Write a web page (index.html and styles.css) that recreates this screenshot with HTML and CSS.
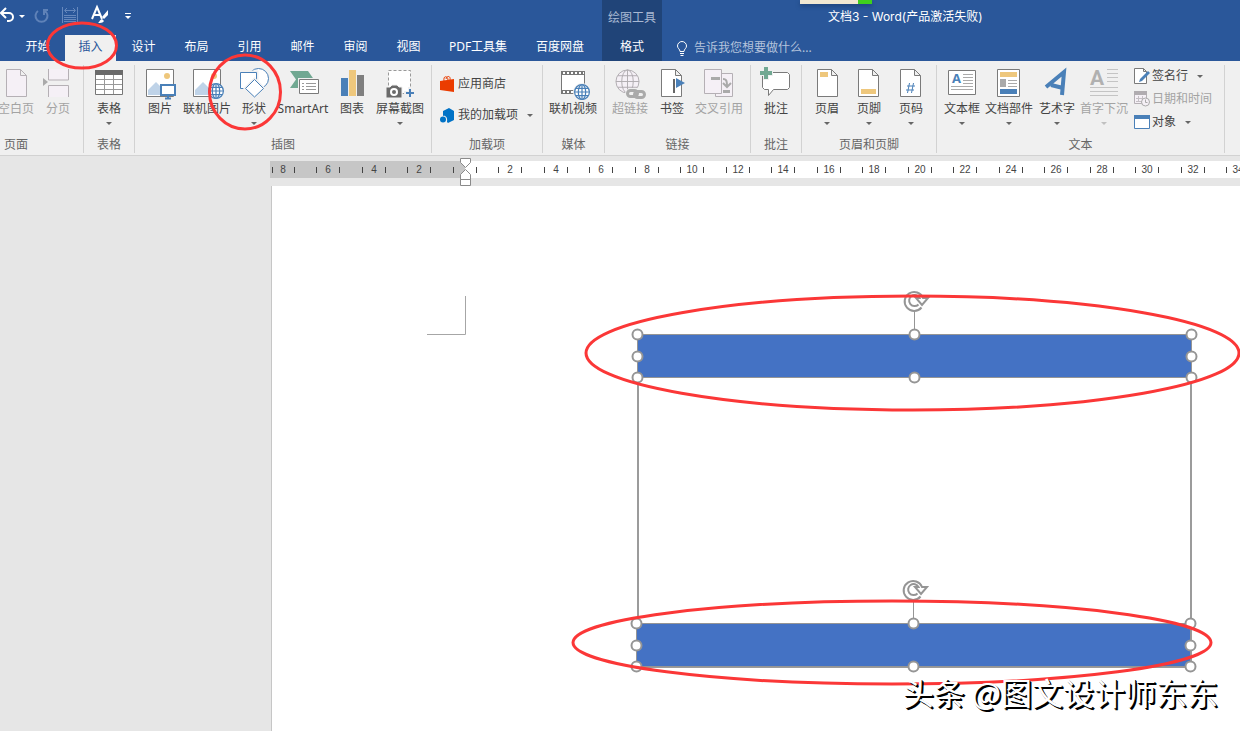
FILE: index.html
```html
<!DOCTYPE html>
<html lang="zh-CN">
<head>
<meta charset="utf-8">
<title>文档3 - Word</title>
<link rel="stylesheet" href="styles.css">
</head>
<body>
<svg class="defs" aria-hidden="true">
  <symbol id="globe" viewBox="0 0 26 26" overflow="visible">
    <circle cx="13" cy="13" r="12"/><ellipse cx="13" cy="13" rx="6" ry="12"/><path d="M13 1v24M1 13h24M3 7h20M3 19h20"/>
  </symbol>
  <symbol id="sheet" viewBox="0 0 22 29"><path d="M.5.5h14l6 6v21h-20zM14.500.5v6h6"/></symbol>
  <symbol id="photo" viewBox="0 0 28 28">
    <path fill="#fff" stroke="#7a7a7a" d="M.5.5h27v27H.500z"/><circle cx="21" cy="7" r="3" fill="#eec77c"/><path fill="#bfd3e8" d="M2 26v-5l8-8 13 13z"/>
  </symbol>
  <symbol id="rotate" viewBox="0 0 28 24" overflow="visible">
    <path d="M18.500 19.500A9.500 9.500 0 1 1 20 10h5l-6 7-6-7h3.500a5.500 5.500 0 1 0-1 6.500" fill="#fff" stroke="#959595" stroke-width="2"/>
  </symbol>
</svg>

<header class="header">
  <div class="header-main">
    <div class="quick">
      <button class="q-btn" aria-label="撤消"><svg width="16" height="16"><path d="M6 0L1 5l5 5M1 5h8a4 4 0 0 1 0 8H7" fill="none" stroke="#fff" stroke-width="2"/></svg></button>
      <button class="q-btn q-drop" aria-label="撤消列表"><i class="caret light"></i></button>
      <button class="q-btn q-redo" aria-label="重复"><svg width="16" height="16"><path d="M4 3a6 6 0 1 0 7 0M10 7V2h4" fill="none" stroke="#5f82b8" stroke-width="2"/></svg></button>
      <button class="q-btn q-grid" aria-label="行距"><svg width="16" height="16"><path d="M.5-1v16M15.500-1v16M2 7.500h12M2 9.500h12M2 11.500h12M2 13.500h12M3 2.500h10M5 0L2.500 2.500 5 5M11 0l2.500 2.500L11 5" fill="none" stroke="#6688bd"/></svg></button>
      <button class="q-btn q-style" aria-label="样式"><svg width="18" height="18"><path d="M1 12L6 0l5 12M3 8h6" fill="none" stroke="#fff" stroke-width="2"/><path d="M17 3v5l-4 4-2-2zM11 12l2 2c-1 2-4 2-6 2 2-1 1-3 4-4z" fill="#fff"/></svg></button>
      <button class="q-btn" aria-label="自定义快速访问工具栏"><svg width="8" height="8"><path d="M1 1.500h6" stroke="#fff"/><path d="M1 4h6L4 7z" fill="#fff"/></svg></button>
    </div>
    <nav class="tabs">
      <button class="tab">开始</button><button class="tab active">插入</button><button class="tab">设计</button><button class="tab">布局</button><button class="tab">引用</button><button class="tab">邮件</button><button class="tab">审阅</button><button class="tab">视图</button><button class="tab tab-pdf">PDF工具集</button><button class="tab tab-pan">百度网盘</button>
    </nav>
  </div>
  <div class="context">
    <span class="context-title">绘图工具</span>
    <button class="tab">格式</button>
  </div>
  <div class="header-side">
    <h1 class="title">文档3 - Word(产品激活失败)</h1>
    <label class="tell">
      <svg width="12" height="15"><path d="M4 10.500C4 8 1.500 7.500 1.500 5a4.500 4.500 0 0 1 9 0C10.500 7.500 8 8 8 10.500zM4 12.500h4M4.500 14.500h3" fill="none" stroke="#fff"/></svg>
      <input type="text" placeholder="告诉我您想要做什么..." aria-label="告诉我您想要做什么">
    </label>
  </div>
  <div class="sticker"></div>
</header>

<div class="ribbon">
  <section class="group g-page">
    <div class="items">
      <button class="cmd off w40"><svg class="ico"><use href="#sheet" x="6" y="1" width="22" height="29" fill="#f5f0f6" stroke="#b5b0b5"/></svg>空白页</button>
      <button class="cmd off w44"><svg class="ico"><path d="M6.500 1v11h20V1M6.500 29V17.500h20V29" fill="#f5f0f6" stroke="#b5b0b5"/><path d="M1 10l5 4-5 4z" fill="#aaa"/></svg>分页</button>
    </div>
    <span class="label">页面</span>
  </section>
  <section class="group g-table">
    <div class="items">
      <button class="cmd w50"><svg class="ico"><path d="M2.500 2.500h27v24h-27z" fill="#fff" stroke="#777"/><path d="M2 2h28v5H2z" fill="#6a6a6a"/><path d="M3 11.500h26M3 16.500h26M3 21.500h26M11.500 7v19M20.500 7v19" stroke="#999"/></svg>表格<i class="caret"></i></button>
    </div>
    <span class="label">表格</span>
  </section>
  <section class="group g-illus">
    <div class="items">
      <button class="cmd w40"><svg class="ico"><use href="#photo" x="2" y="1" width="28" height="28"/><path d="M17 17h14v10H17z" fill="#fff" stroke="#4a80b8" stroke-width="2"/><path d="M24 27v3M21 30.500h6" stroke="#4a80b8" stroke-width="2"/></svg>图片</button>
      <button class="cmd w54"><svg class="ico"><use href="#photo" x="2" y="1" width="28" height="28"/><use href="#globe" x="17" y="15" width="16" height="16" fill="#fff" stroke="#4a80b8" stroke-width="2"/></svg>联机图片</button>
      <button class="cmd w40"><svg class="ico"><circle cx="20.500" cy="10.500" r="10" fill="#fff" stroke="#4a80b8"/><path d="M2 4h17v17H2z" fill="#fff" stroke="#f0f0f0" stroke-width="3"/><path d="M2.500 4.500h16v16h-16z" fill="#fff" stroke="#4a80b8"/><path d="M16.500 10.500l10 10-10 9-10-9z" fill="#fff" stroke="#f0f0f0" stroke-width="2"/><path d="M16.500 11.500l9 9-9 8.500-9-8.500z" fill="#fff" stroke="#4a80b8"/></svg>形状<i class="caret"></i></button>
      <button class="cmd w58"><svg class="ico"><path d="M3 3h18l6 8.500-6 8.500H3l6-8.500z" fill="#71a892"/><path d="M12.500 11.500h19v14h-19z" fill="#fff" stroke="#f0f0f0" stroke-width="3"/><path d="M12.500 11.500h19v14h-19z" fill="#fff" stroke="#7a7a7a"/><path d="M15 15.500h2M15 18.500h2M15 21.500h2M19 15.500h10M19 18.500h10M19 21.500h10" stroke="#999"/></svg>SmartArt</button>
      <button class="cmd w40"><svg class="ico"><path d="M5 10h7v18H5z" fill="#4a80b8"/><path d="M13 2h7v26h-7z" fill="#eec77c"/><path d="M21 7h7v21h-7z" fill="#7f7f7f"/></svg>图表</button>
      <button class="cmd w56"><svg class="ico"><path d="M4.500 2.500h22v23h-22z" fill="#fff" stroke="#999" stroke-dasharray="3 2"/><path d="M2 19h4l2-2h5l2 2h3v11H2z" fill="#6a6a6a" stroke="#f0f0f0"/><circle cx="10" cy="24" r="3" fill="#6a6a6a" stroke="#fff" stroke-width="2"/><path d="M26 19v12M20 25h12" stroke="#f0f0f0" stroke-width="4"/><path d="M26 21v8M22 25h8" stroke="#4a80b8" stroke-width="2"/></svg>屏幕截图<i class="caret"></i></button>
    </div>
    <span class="label">插图</span>
  </section>
  <section class="group g-addin">
    <div class="rows rows-wide">
      <button class="row"><svg class="sm"><path d="M0 5l14-2v13L0 14z" fill="#eb3c00"/><path d="M4 5c-1-6 4-5 4-1M6 3c1-4 5-3 4 1" fill="none" stroke="#eb3c00"/></svg>应用商店</button>
      <button class="row"><svg class="sm"><path d="M3 4l6-3 5 3v9l-6 3-1-1c1-5-2-7-4-6z" fill="#0072c6"/><circle cx="3" cy="12.500" r="3" fill="#0072c6"/></svg>我的加载项<i class="caret"></i></button>
    </div>
    <span class="label">加载项</span>
  </section>
  <section class="group g-media">
    <div class="items">
      <button class="cmd w60"><svg class="ico"><path d="M4.500 3.500h23v22h-23z" fill="#fff" stroke="#777"/><path d="M4 5h24M4 24h24" stroke="#777" stroke-width="4"/><path d="M6 5h21M6 24h21" stroke="#fff" stroke-width="2" stroke-dasharray="2 2"/><circle cx="25" cy="24" r="9" fill="#f0f0f0"/><use href="#globe" x="17" y="16" width="16" height="16" fill="#fff" stroke="#4a80b8" stroke-width="2"/></svg>联机视频</button>
    </div>
    <span class="label">媒体</span>
  </section>
  <section class="group g-links">
    <div class="items">
      <button class="cmd off w50"><svg class="ico"><use href="#globe" x="1" y="1" width="25" height="25" fill="#f5f0f6" stroke="#b0acb0"/><path d="M11 26a6 6 0 0 1 6-6h9l7 5v7H17a6 6 0 0 1-6-6z" fill="#f0f0f0"/><rect x="13.500" y="22.500" width="10" height="6" rx="3" fill="none" stroke="#aaa" stroke-width="3"/><rect x="20.500" y="23.500" width="10" height="6" rx="3" fill="none" stroke="#aaa" stroke-width="3"/></svg>超链接</button>
      <button class="cmd w34"><svg class="ico"><use href="#sheet" x="5" y="1" width="22" height="29" fill="#fff" stroke="#7a7a7a"/><path d="M18 11v14" stroke="#666" stroke-width="2"/><path d="M20 10l9 5-9 5z" fill="#4a80b8"/></svg>书签</button>
      <button class="cmd off w60"><svg class="ico"><path d="M12.500 5.500h17v23h-17z" fill="#f5f0f6" stroke="#b5b0b5"/><path d="M1.500 1.500h17v24h-17z" fill="#f5f0f6" stroke="#b5b0b5"/><path d="M8 10.500h9M20 23.500h7" stroke="#aaa" stroke-width="3"/><path d="M20 11c4 0 4 3 4 8M20 15l4 4 4-4" fill="none" stroke="#aaa" stroke-width="2"/></svg>交叉引用</button>
    </div>
    <span class="label">链接</span>
  </section>
  <section class="group g-note">
    <div class="items">
      <button class="cmd w50"><svg class="ico"><path d="M4.500 4.500h23l2 2v13l-2 2h-14l-5 6v-6h-4l-2-2v-13z" fill="#fff" stroke="#7a7a7a"/><path d="M6 -1v13M-1 5h14" stroke="#f0f0f0" stroke-width="6"/><path d="M6 -1v12M0 5h12" stroke="#71a892" stroke-width="4"/></svg>批注</button>
    </div>
    <span class="label">批注</span>
  </section>
  <section class="group g-hf">
    <div class="items">
      <button class="cmd w42"><svg class="ico"><use href="#sheet" x="6" y="1" width="22" height="29" fill="#fff" stroke="#7a7a7a"/><path d="M9 4h8v5H9z" fill="#eec77c"/></svg>页眉<i class="caret"></i></button>
      <button class="cmd w42"><svg class="ico"><use href="#sheet" x="5" y="1" width="22" height="29" fill="#fff" stroke="#7a7a7a"/><path d="M8 21h15v5H8z" fill="#eec77c"/></svg>页脚<i class="caret"></i></button>
      <button class="cmd w42"><svg class="ico"><use href="#sheet" x="5" y="1" width="22" height="29" fill="#fff" stroke="#7a7a7a"/><path d="M14.500 15l-2 10M18.500 15l-2 10M12 18h8M11 22h8" stroke="#4a80b8"/></svg>页码<i class="caret"></i></button>
    </div>
    <span class="label">页眉和页脚</span>
  </section>
  <section class="group g-text">
    <div class="text-body">
      <div class="items">
        <button class="cmd w44"><svg class="ico"><path d="M2.500 2.500h27v24h-27z" fill="#fff" stroke="#7a7a7a"/><text class="letter-s" x="6" y="15">A</text><path d="M17 6.500h10M17 9.500h10M17 12.500h10M17 15.500h10M5 18.500h22M5 21.500h22" stroke="#aaa"/></svg>文本框<i class="caret"></i></button>
        <button class="cmd w50"><svg class="ico"><path d="M4.500 1.500h22v27h-22z" fill="#fff" stroke="#7a7a7a"/><path d="M7 4h17v5H7z" fill="#eec77c"/><path d="M7 11h6v8H7z" fill="#aaa"/><path d="M15 12.500h9M15 15.500h9M15 18.500h9" stroke="#aaa"/><path d="M7 21h17v5H7z" fill="#4a80b8"/></svg>文档部件<i class="caret"></i></button>
        <button class="cmd w46"><svg class="ico"><path d="M5 19L23 4l-2 23M10 17l12 3" fill="none" stroke="#4a80b8" stroke-width="4"/></svg>艺术字<i class="caret"></i></button>
        <button class="cmd off w48"><svg class="ico"><text class="letter-drop" x="2" y="17">A</text><path d="M19 1.500h11M19 5.500h11M19 9.500h11M19 13.500h11M2 19.500h28M2 23.500h28M2 27.500h28" stroke="#c4c4c4"/></svg>首字下沉<i class="caret"></i></button>
      </div>
      <div class="rows">
        <button class="row"><svg class="sm"><path d="M.5.5h9l3 3v12H.500zM9.500.5v3h3" fill="#fff" stroke="#7a7a7a"/><path d="M14 3l2 2-8 8-3 1 1-3z" fill="#4a80b8"/></svg>签名行<i class="caret"></i></button>
        <button class="row off"><svg class="sm"><path d="M.5.5h12v12H.500z" fill="#f5f0f6" stroke="#b5b0b5"/><path d="M0 2h13" stroke="#b0acb0" stroke-width="4"/><path d="M2 7.500h8M2 10.500h6M4.500 5v6M8.500 5v5" stroke="#c5c0c5"/><circle cx="11.500" cy="11" r="4" fill="#f5f0f6" stroke="#aaa"/><path d="M11.500 8.500v3h2" fill="none" stroke="#aaa"/></svg>日期和时间</button>
        <button class="row"><svg class="sm"><path d="M.5 1.500h15v13H.500z" fill="#fff" stroke="#4a80b8"/><path d="M0 3h16" stroke="#4a80b8" stroke-width="4"/></svg>对象<i class="caret"></i></button>
      </div>
    </div>
    <span class="label">文本</span>
  </section>
  <section class="group g-last">
    <div class="items">
      <button class="cmd off w50"><svg class="ico"><path d="M4 11l5-9 4 6" fill="none" stroke="#aaa" stroke-width="2"/></svg>公式</button>
    </div>
  </section>
</div>

<div class="ruler">
  <svg class="scale" aria-label="标尺">
    <rect x="270" y="0" width="195" height="17" fill="#c6c6c6"/>
    <rect x="465" y="0" width="100%" height="17" fill="#fff"/>
    <path class="ticks" d="M272.500 6v6M294.500 6v6M316.500 6v6M339.500 6v6M362.500 6v6M385.500 6v6M407.500 6v6M430.500 6v6M453.500 6v6M476.500 6v6M498.500 6v6M521.500 6v6M544.500 6v6M567.500 6v6M589.500 6v6M612.500 6v6M635.500 6v6M658.500 6v6M680.500 6v6M703.500 6v6M726.500 6v6M749.500 6v6M771.500 6v6M794.500 6v6M817.500 6v6M840.500 6v6M862.500 6v6M885.500 6v6M908.500 6v6M931.500 6v6M953.500 6v6M976.500 6v6M999.500 6v6M1022.500 6v6M1044.500 6v6M1067.500 6v6M1090.500 6v6M1113.500 6v6M1135.500 6v6M1158.500 6v6M1181.500 6v6M1204.500 6v6M1226.500 6v6"/>
    <g class="nums">
      <text x="283" y="12">8</text><text x="328" y="12">6</text><text x="374" y="12">4</text><text x="419" y="12">2</text>
      <text x="510" y="12">2</text><text x="556" y="12">4</text><text x="601" y="12">6</text><text x="647" y="12">8</text><text x="692" y="12">10</text><text x="738" y="12">12</text><text x="783" y="12">14</text><text x="829" y="12">16</text><text x="874" y="12">18</text><text x="920" y="12">20</text><text x="965" y="12">22</text><text x="1011" y="12">24</text><text x="1056" y="12">26</text><text x="1102" y="12">28</text><text x="1147" y="12">30</text><text x="1193" y="12">32</text><text x="1238" y="12">34</text>
    </g>
    <path d="M460.500-2.500h10v4l-5 5-5-5zM460.500 18.500v-5l5-5 5 5v5zM460.500 18.500h10v6h-10z" fill="#fff" stroke="#8a8a8a"/>
  </svg>
</div>

<main class="workspace">
  <div class="paper">
    <svg class="canvas" aria-label="文档内容">
      <g transform="translate(-272 -186)">
        <path d="M465.500 296v38.500H427" fill="none" stroke="#a6a6a6"/>
        <path d="M638 378v289h553V378" fill="none" stroke="#9b9b9b" stroke-width="2"/>
        <rect x="637.500" y="334.500" width="554" height="43" fill="#4472c4" stroke="#959595"/>
        <rect x="636.500" y="623.500" width="554" height="43" fill="#4472c4" stroke="#959595"/>
        <path d="M914.500 311v20M913.500 600v20" stroke="#959595"/>
        <use href="#rotate" x="903" y="288" width="28" height="24"/>
        <use href="#rotate" x="902" y="577" width="28" height="24"/>
        <g fill="#fff" stroke="#959595" stroke-width="2">
          <circle cx="637.500" cy="334.500" r="5"/><circle cx="914.500" cy="334.500" r="5"/><circle cx="1191.500" cy="334.500" r="5"/>
          <circle cx="637.500" cy="356.500" r="5"/><circle cx="1191.500" cy="356.500" r="5"/>
          <circle cx="637.500" cy="377.500" r="5"/><circle cx="914.500" cy="377.500" r="5"/><circle cx="1191.500" cy="377.500" r="5"/>
          <circle cx="636.500" cy="623.500" r="5"/><circle cx="913.500" cy="623.500" r="5"/><circle cx="1190.500" cy="623.500" r="5"/>
          <circle cx="636.500" cy="645.500" r="5"/><circle cx="1190.500" cy="645.500" r="5"/>
          <circle cx="636.500" cy="666.500" r="5"/><circle cx="913.500" cy="666.500" r="5"/><circle cx="1190.500" cy="666.500" r="5"/>
        </g>
      </g>
    </svg>
  </div>
</main>

<svg class="marks" aria-hidden="true">
  <g fill="none" stroke="#fb3737" stroke-width="3">
    <ellipse cx="82" cy="45.500" rx="34.500" ry="22.500"/>
    <ellipse cx="245" cy="92" rx="35.500" ry="37"/>
    <ellipse cx="912.500" cy="353" rx="326.500" ry="57"/>
    <ellipse cx="892" cy="642.500" rx="319" ry="41.500"/>
  </g>
</svg>
<div class="watermark">头条 @图文设计师东东</div>
</body>
</html>
```

FILE: styles.css
```css
* { box-sizing: border-box; }
body {
  position: relative;
  display: flex;
  flex-direction: column;
  min-height: 100vh;
  margin: 0;
  overflow: hidden;
  background: #e6e6e6;
  color: #444;
  font: 12px/20px "Noto Sans", "Noto Sans CJK SC", sans-serif;
}
button, input { font: inherit; color: inherit; background: none; border: 0; padding: 0; margin: 0; }
button { white-space: nowrap; }
svg { display: block; flex: none; overflow: visible; }
.defs { position: absolute; width: 0; height: 0; }

.header { position: relative; display: flex; background: #2a579a; color: #fff; }
.header-main { width: 602px; flex: none; }
.quick { display: flex; align-items: center; height: 32px; }
.q-btn { display: flex; align-items: center; }
.q-drop { margin-left: 3px; margin-right: 9px; }
.q-redo { margin-right: 12px; }
.q-grid { margin-right: 13px; }
.q-style { margin-right: 15px; }
.tabs { display: flex; padding-left: 11px; padding-top: 3px; }
.tab { width: 53px; height: 26px; line-height: 22px; padding-bottom: 2px; text-align: center; }
.tab.active { width: 51px; margin: 0 1px; background: #f0f0f0; color: #2a579a; }
.tab-pdf { width: 86px; }
.tab-pan { width: 78px; }
.context { display: flex; flex-direction: column; align-items: center; width: 60px; flex: none; background: #204478; }
.context-title { height: 35px; line-height: 35px; color: #a9b9d3; }
.header-side { flex: 1; min-width: 0; }
.title { margin: 0; padding-left: 166px; height: 35px; font-size: 12px; font-weight: 400; font-family: Inter, "Noto Sans CJK SC", sans-serif; line-height: 34px; white-space: nowrap; }
.tell { display: flex; align-items: center; gap: 6px; height: 26px; padding-left: 14px; }
.tell input { width: 180px; }
.tell input::placeholder { color: #b4c3dc; opacity: 1; }
.sticker { position: absolute; left: 800px; top: 0; width: 72px; height: 4px; background: linear-gradient(90deg, #f1e8d2 58px, #3fd01c 58px); box-shadow: 0 2px 4px #1d4278; }

.caret { display: block; flex: none; width: 0; height: 0; border: 3px solid transparent; border-top-color: #666; border-bottom: 0; }
.caret.light { border-top-color: #fff; }
.ribbon { display: flex; padding: 4px 0 2px; background: #f0f0f0; border-bottom: 1px solid #d2d2d2; }
.group { display: flex; flex-direction: column; justify-content: space-between; flex: none; height: 88px; border-right: 1px solid #d2d2d2; }
.items { display: flex; }
.cmd { display: flex; flex-direction: column; align-items: center; flex: none; padding-top: 3px; }
.ico { width: 32px; height: 31px; }
.cmd .caret { margin-top: 3px; }
.off { color: #a3a3a3; }
.off .caret { border-top-color: #c0c0c0; }
.label { text-align: center; line-height: 16px; color: #666; }
.w34 { width: 34px; } .w40 { width: 40px; } .w42 { width: 42px; } .w44 { width: 44px; }
.w46 { width: 46px; } .w48 { width: 48px; } .w50 { width: 50px; } .w54 { width: 54px; }
.w56 { width: 56px; } .w58 { width: 58px; } .w60 { width: 60px; }
.g-page { width: 84px; }
.g-page .items { margin-left: -4px; }
.g-page .label { text-align: left; padding-left: 4px; }
.g-table { width: 51px; }
.g-illus { width: 297px; }
.g-illus .items { padding-left: 5px; }
.g-addin { width: 111px; }
.g-media { width: 62px; }
.g-links { width: 146px; }
.g-note { width: 51px; }
.g-hf { width: 135px; }
.g-hf .items { padding-left: 4px; }
.g-text { width: 288px; }
.text-body { display: flex; gap: 6px; padding-left: 3px; }
.g-last { flex: 1; width: 0; border: 0; }
.g-last .items { padding-left: 3px; }
.rows { display: flex; flex-direction: column; gap: 3px; padding-top: 1px; }
.rows-wide { gap: 11px; padding: 9px 0 0 8px; }
.row { display: flex; align-items: center; }
.sm { width: 16px; height: 16px; margin-right: 2px; }
.row .caret { margin-left: 9px; }
.letter-s { font: bold 13px "Open Sans", sans-serif; fill: #4a80b8; }
.letter-drop { font: bold 21px Roboto, sans-serif; fill: #b0b0b0; }

.ruler { height: 30px; padding-top: 5px; }
.scale { width: 100%; height: 17px; }
.ticks { stroke: #444; }
.nums { font: 10px "Liberation Sans", sans-serif; fill: #444; text-anchor: middle; }

.workspace { display: flex; flex: 1; padding-left: 271px; }
.paper { flex: 1; background: #fff; border-left: 1px solid #c6c6c6; }
.canvas { width: 100%; height: 100%; }
.marks { position: absolute; left: 0; top: 0; width: 100%; height: 100%; pointer-events: none; }
.watermark {
  position: absolute;
  right: 22px;
  bottom: 17px;
  color: #fff;
  font-family: "Noto Sans CJK SC", sans-serif;
  font-size: 31px;
  line-height: 44px;
  white-space: nowrap;
  text-shadow: 1px 1px 0 #000, 2px 2px 0 #000;
}
```
